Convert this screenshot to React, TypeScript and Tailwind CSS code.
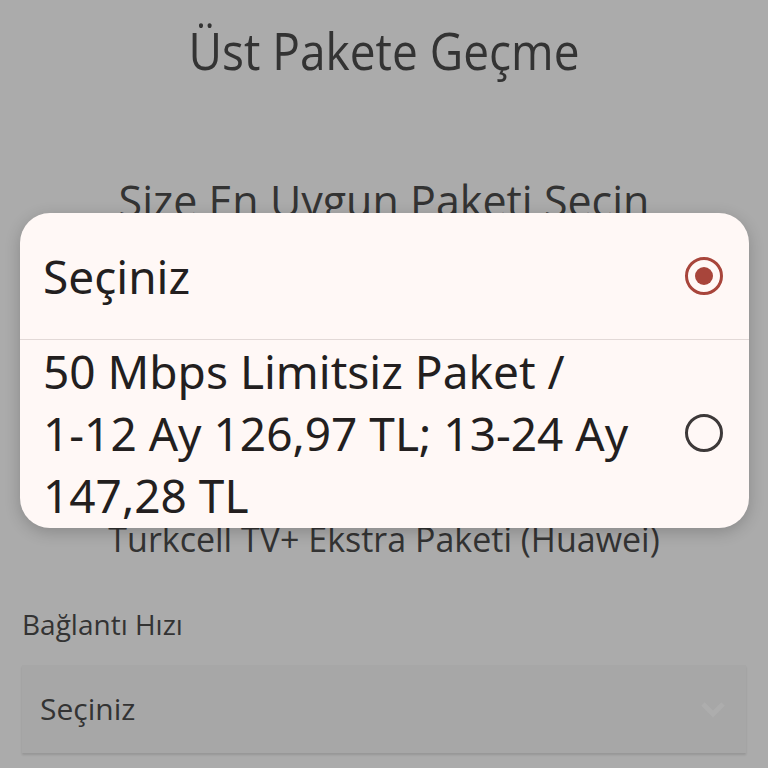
import React from 'react';

function Radio({ checked }: { checked: boolean }) {
  if (checked) {
    return (
      <span className="flex h-[38px] w-[38px] shrink-0 items-center justify-center rounded-full border-[3px] border-[#a8453b]">
        <span className="h-[18px] w-[18px] rounded-full bg-[#a8453b]" />
      </span>
    );
  }
  return <span className="h-[38px] w-[38px] shrink-0 rounded-full border-[3px] border-[#3d3939]" />;
}

export default function App() {
  return (
    <div className="relative h-[768px] w-[768px] overflow-hidden bg-[#ababab] font-['Open_Sans',sans-serif] text-[#333333]">
      <h1 className="mt-[19px] text-center text-[52px] leading-[62px] font-normal">
        <span className="inline-block scale-x-[0.885]">Üst Pakete Geçme</span>
      </h1>

      <h2 className="mt-[91px] text-center text-[43px] leading-[58px] font-normal">Size En Uygun Paketi Seçin</h2>

      <p className="mt-[286px] text-center text-[34px] leading-[46px]">Turkcell TV+ Ekstra Paketi (Huawei)</p>

      <div className="mt-[43px] px-[22px]">
        <label className="block text-[28px] leading-[38px]">Bağlantı Hızı</label>
        <div className="mt-[22px] flex h-[88px] items-center justify-between bg-[#a7a7a7] pl-[18px] pr-[20px] shadow-[0_2px_2px_rgba(0,0,0,0.12)]">
          <span className="text-[30px] leading-[40px]">Seçiniz</span>
          <svg width="26" height="18" viewBox="0 0 26 18" className="text-[#adadad]">
            <path d="M3 4 L13 14 L23 4" fill="none" stroke="currentColor" strokeWidth="5" />
          </svg>
        </div>
      </div>

      <div className="absolute left-[20px] top-[213px] flex h-[315px] w-[729px] flex-col overflow-hidden rounded-[30px] bg-[#fff8f6] font-['Noto_Sans',sans-serif] text-[46px] text-[#231f1f] shadow-[0_4px_16px_rgba(0,0,0,0.2)]">
        <div className="flex h-[126px] shrink-0 items-center justify-between pl-[23px] pr-[26px]">
          <span className="leading-[62px]">Seçiniz</span>
          <Radio checked />
        </div>
        <div className="h-px shrink-0 bg-[#e2d9d7]" />
        <div className="flex items-center justify-between pl-[23px] pr-[26px]">
          <div className="whitespace-nowrap leading-[62px]">
            <div>50 Mbps Limitsiz Paket /</div>
            <div>1-12 Ay 126,97 TL; 13-24 Ay</div>
            <div>147,28 TL</div>
          </div>
          <Radio checked={false} />
        </div>
      </div>
    </div>
  );
}
